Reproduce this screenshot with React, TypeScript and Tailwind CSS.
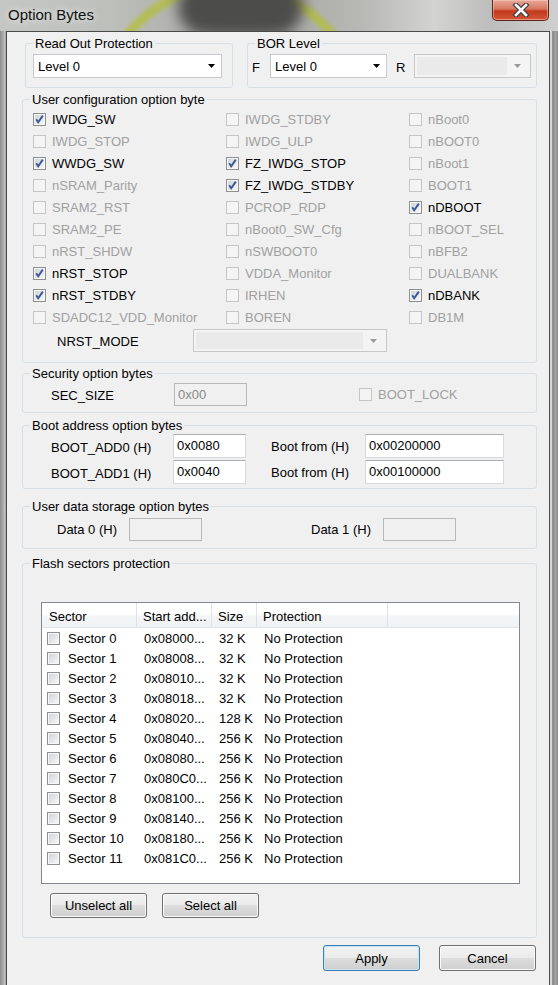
import React from 'react';
import clsx from 'clsx';

type Opt = [string, boolean];

// checked options are the only enabled ones in this dialog
const COLS: Opt[][] = [
  [
    ['IWDG_SW', true],
    ['IWDG_STOP', false],
    ['WWDG_SW', true],
    ['nSRAM_Parity', false],
    ['SRAM2_RST', false],
    ['SRAM2_PE', false],
    ['nRST_SHDW', false],
    ['nRST_STOP', true],
    ['nRST_STDBY', true],
    ['SDADC12_VDD_Monitor', false],
  ],
  [
    ['IWDG_STDBY', false],
    ['IWDG_ULP', false],
    ['FZ_IWDG_STOP', true],
    ['FZ_IWDG_STDBY', true],
    ['PCROP_RDP', false],
    ['nBoot0_SW_Cfg', false],
    ['nSWBOOT0', false],
    ['VDDA_Monitor', false],
    ['IRHEN', false],
    ['BOREN', false],
  ],
  [
    ['nBoot0', false],
    ['nBOOT0', false],
    ['nBoot1', false],
    ['BOOT1', false],
    ['nDBOOT', true],
    ['nBOOT_SEL', false],
    ['nBFB2', false],
    ['DUALBANK', false],
    ['nDBANK', true],
    ['DB1M', false],
  ],
];

const SECTORS: [string, string][] = [
  ['0x08000...', '32 K'],
  ['0x08008...', '32 K'],
  ['0x08010...', '32 K'],
  ['0x08018...', '32 K'],
  ['0x08020...', '128 K'],
  ['0x08040...', '256 K'],
  ['0x08080...', '256 K'],
  ['0x080C0...', '256 K'],
  ['0x08100...', '256 K'],
  ['0x08140...', '256 K'],
  ['0x08180...', '256 K'],
  ['0x081C0...', '256 K'],
];

const CheckBox: React.FC<{ checked?: boolean; disabled?: boolean }> = ({
  checked,
  disabled,
}) => (
  <span
    className={clsx(
      'relative block w-[13px] h-[13px] shrink-0 border p-[1px]',
      disabled ? 'border-[#c5c5c5] bg-[#f4f4f4]' : 'border-[#8e8f8f] bg-[#f7f7f7]',
    )}
  >
    {!disabled && (
      <span className="block w-full h-full bg-[linear-gradient(135deg,#d0d3d8,#f7f7f7)]" />
    )}
    {checked && (
      <svg className="absolute left-0 top-0" width="11" height="11" viewBox="0 0 11 11">
        <path d="M2.2 5.2 L4.2 8.2 L8.8 1.6" fill="none" stroke="#3b5897" strokeWidth="1.9" />
      </svg>
    )}
  </span>
);

const Arrow: React.FC<{ disabled?: boolean }> = ({ disabled }) => (
  <svg width="7" height="4" viewBox="0 0 7 4">
    <path d="M0 0h7L3.5 4z" fill={disabled ? '#9a9a9a' : '#000'} />
  </svg>
);

const Combo: React.FC<{ value?: string; disabled?: boolean; className?: string }> = ({
  value,
  disabled,
  className,
}) =>
  disabled ? (
    <div className={clsx('flex border border-[#c8c8c8] bg-[#f4f4f4] p-[2px]', className)}>
      <div className="flex-1 bg-[#eaeaea]" />
      <div className="w-[21px] flex items-center justify-center">
        <Arrow disabled />
      </div>
    </div>
  ) : (
    <div className={clsx('flex items-center border border-[#c6c9ce] bg-white', className)}>
      <span className="flex-1 pl-[4px]">{value}</span>
      <div className="w-[19px] flex items-center justify-center">
        <Arrow />
      </div>
    </div>
  );

const Input: React.FC<{ value?: string; disabled?: boolean; className?: string }> = ({
  value,
  disabled,
  className,
}) => (
  <div
    className={clsx(
      'flex items-center border pl-[3px]',
      disabled
        ? 'border-[#b8b8b8] bg-[#f0f0f0] text-[#8a8a8a]'
        : 'border-[#d6d9de] border-t-[#abadb3] bg-white',
      className,
    )}
  >
    {value}
  </div>
);

const Group: React.FC<{ title: string; className?: string; children?: React.ReactNode }> = ({
  title,
  className,
  children,
}) => (
  <fieldset className={clsx('rounded-[3px] border border-[#d5dfe5]', className)}>
    <legend className="ml-[7px] px-[2px] leading-[15px]">{title}</legend>
    {children}
  </fieldset>
);

const Btn: React.FC<{ children: React.ReactNode; primary?: boolean; className?: string }> = ({
  children,
  primary,
  className,
}) => (
  <button
    className={clsx(
      'w-[97px] rounded-[3px] border text-[13px] text-black bg-[linear-gradient(#f2f2f2_0%,#ebebeb_50%,#dddddd_50%,#cfcfcf_100%)]',
      primary
        ? 'border-[#3c7fb1] shadow-[inset_0_0_0_1px_#c4e4f6]'
        : 'border-[#707070] shadow-[inset_0_0_0_1px_#fbfbfb]',
      className,
    )}
  >
    {children}
  </button>
);

export default function App() {
  const grid: Opt[] = [];
  for (let i = 0; i < 10; i++) grid.push(COLS[0][i], COLS[1][i], COLS[2][i]);

  return (
    <div className="w-[558px] h-[985px] overflow-hidden flex flex-col bg-[#9d9d9d] font-['Liberation_Sans',Arial,sans-serif] text-[13px] leading-[15px] text-black">
      {/* title bar over blurred wallpaper */}
      <div className="relative h-[31px] shrink-0 overflow-hidden bg-[linear-gradient(90deg,#c4c7c4_0%,#bdbfbb_20%,#a3a39f_45%,#b8b9b5_65%,#d3d3d1_78%,#bdbdbd_88%,#cfcfcf_100%)]">
        <div className="absolute left-[94px] top-[-19px] w-[272px] h-[272px] rounded-full border-[9px] border-[#b3bf3e] blur-[2px] opacity-80" />
        <div className="absolute left-[178px] top-[-22px] w-[125px] h-[58px] rounded-full bg-[#4c4c4a] blur-[7px]" />
        <div className="absolute left-[8px] top-[6px] text-[15px] leading-[18px] text-[#111] [text-shadow:0_0_7px_rgba(255,255,255,0.95)]">
          Option Bytes
        </div>
        <div className="absolute left-[492px] top-0 w-[57px] h-[21px] rounded-b-[5px] border border-t-0 border-[#5a2418] bg-[linear-gradient(#e9a99a_0%,#d9765f_45%,#c2391b_55%,#d5553a_100%)] flex items-center justify-center shadow-[inset_0_0_0_1px_rgba(255,210,200,0.5)]">
          <svg width="18" height="14" viewBox="0 0 18 14">
            <path d="M4 2 L14 12 M14 2 L4 12" stroke="#3f3f3f" strokeWidth="5" strokeLinecap="square" />
            <path d="M4 2 L14 12 M14 2 L4 12" stroke="#fff" strokeWidth="2.6" strokeLinecap="square" />
          </svg>
        </div>
      </div>

      <div className="flex flex-1 min-h-0">
        <div className="w-[6px] bg-[linear-gradient(90deg,#8f8f8f,#a7a7a7_50%,#c9c9c9_85%,#8a8a8a)]" />
        <div className="flex-1 flex flex-col border-l border-t border-r border-[#4a4a4a] bg-[#f0f0f0]">
          {/* read out / BOR */}
          <div className="flex mt-[4px] ml-[18px] gap-[14px]">
            <Group title="Read Out Protection" className="w-[208px] h-[52px]">
              <Combo value="Level 0" className="ml-[7px] mt-[3px] w-[189px] h-[24px]" />
            </Group>
            <Group title="BOR Level" className="w-[290px] h-[52px]">
              <div className="flex items-center mt-[3px] h-[24px]">
                <span className="ml-[4px] w-[18px] pt-[2px]">F</span>
                <Combo value="Level 0" className="w-[117px] h-[24px]" />
                <span className="ml-[9px] w-[18px] pt-[2px]">R</span>
                <Combo disabled className="w-[117px] h-[24px]" />
              </div>
            </Group>
          </div>

          <div className="flex flex-col ml-[15px] w-[515px]">
            <Group title="User configuration option byte" className="mt-[4px] h-[271px]">
              <div className="grid grid-cols-[193px_183px_1fr] mt-[1px] pl-[10px]">
                {grid.map(([label, on]) => (
                  <div key={label} className="flex items-center gap-[6px] h-[22px]">
                    <CheckBox checked={on} disabled={!on} />
                    <span className={on ? 'text-black' : 'text-[#a0a0a0]'}>{label}</span>
                  </div>
                ))}
              </div>
              <div className="flex items-center mt-[1px] h-[23px]">
                <span className="ml-[34px] w-[136px] pt-[1px]">NRST_MODE</span>
                <Combo disabled className="w-[194px] h-[23px]" />
              </div>
            </Group>

            <Group title="Security option bytes" className="mt-[3px] h-[47px]">
              <div className="flex items-center mt-[2px] h-[23px]">
                <span className="ml-[28px] w-[123px] pt-[1px]">SEC_SIZE</span>
                <Input disabled value="0x00" className="w-[73px] h-[23px]" />
                <div className="flex items-center gap-[6px] ml-[112px]">
                  <CheckBox disabled />
                  <span className="text-[#a0a0a0]">BOOT_LOCK</span>
                </div>
              </div>
            </Group>

            <Group title="Boot address option bytes" className="mt-[5px] h-[71px]">
              <div className="flex items-center mt-[1px] h-[24px]">
                <span className="ml-[28px] w-[122px] pt-[2px]">BOOT_ADD0 (H)</span>
                <Input value="0x0080" className="w-[73px] h-[24px] pb-[2px]" />
                <span className="ml-[25px] w-[94px]">Boot from (H)</span>
                <Input value="0x00200000" className="w-[139px] h-[24px] pb-[2px]" />
              </div>
              <div className="flex items-center mt-[2px] h-[24px]">
                <span className="ml-[28px] w-[122px] pt-[2px]">BOOT_ADD1 (H)</span>
                <Input value="0x0040" className="w-[73px] h-[24px] pb-[2px]" />
                <span className="ml-[25px] w-[94px]">Boot from (H)</span>
                <Input value="0x00100000" className="w-[139px] h-[24px] pb-[2px]" />
              </div>
            </Group>

            <Group title="User data storage option bytes" className="mt-[10px] h-[50px]">
              <div className="flex items-center mt-[4px] h-[23px]">
                <span className="ml-[34px] w-[72px]">Data 0 (H)</span>
                <Input disabled className="w-[73px] h-[23px]" />
                <span className="ml-[109px] w-[72px]">Data 1 (H)</span>
                <Input disabled className="w-[73px] h-[23px]" />
              </div>
            </Group>

            <Group title="Flash sectors protection" className="mt-[7px] h-[382px]">
              <div className="ml-[18px] mt-[31px] w-[479px] h-[282px] border border-[#828790] bg-white">
                <div className="flex h-[25px] border-b border-[#e2e3e6] bg-[linear-gradient(#ffffff_0%,#ffffff_45%,#f4f5f7_55%,#f1f2f4_100%)]">
                  <div className="w-[95px] pl-[7px] pt-[2px] flex items-center border-r border-[#dfe1e4]">Sector</div>
                  <div className="w-[75px] pl-[6px] pt-[2px] flex items-center border-r border-[#dfe1e4]">Start add...</div>
                  <div className="w-[45px] pl-[6px] pt-[2px] flex items-center border-r border-[#dfe1e4]">Size</div>
                  <div className="w-[131px] pl-[6px] pt-[2px] flex items-center border-r border-[#dfe1e4]">Protection</div>
                </div>
                {SECTORS.map(([addr, size], i) => (
                  <div key={i} className="flex items-center h-[20px]">
                    <div className="w-[95px] flex items-center pl-[5px] gap-[8px]">
                      <CheckBox />
                      <span>Sector {i}</span>
                    </div>
                    <div className="w-[75px] pl-[7px]">{addr}</div>
                    <div className="w-[45px] pl-[7px]">{size}</div>
                    <div className="w-[131px] pl-[7px]">No Protection</div>
                  </div>
                ))}
              </div>
              <div className="flex gap-[15px] ml-[27px] mt-[9px]">
                <Btn className="h-[25px]">Unselect all</Btn>
                <Btn className="h-[25px]">Select all</Btn>
              </div>
            </Group>
          </div>

          <div className="flex justify-end gap-[19px] mt-[7px] pr-[13px]">
            <Btn primary className="h-[26px]">Apply</Btn>
            <Btn className="h-[26px]">Cancel</Btn>
          </div>
        </div>
        <div className="w-[8px] bg-[linear-gradient(90deg,#d6d6d6_0%,#d6d6d6_20%,#7e7e7e_35%,#a6a6a6_65%,#8c8c8c_100%)]" />
      </div>
    </div>
  );
}
